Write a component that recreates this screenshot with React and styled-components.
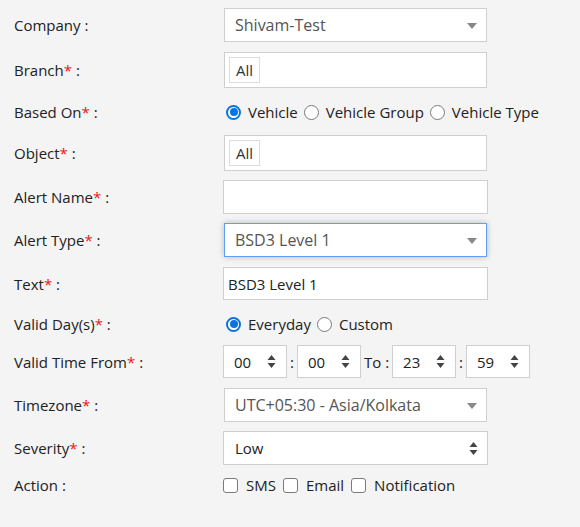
import React from 'react';
import styled, { createGlobalStyle } from 'styled-components';

const GlobalStyle = createGlobalStyle`
  html, body {
    margin: 0;
    padding: 0;
    background: #f4f4f4;
  }
  body {
    font-family: "Open Sans", "Liberation Sans", sans-serif;
    font-size: 15px;
    color: #222;
  }
`;

export default function App() {
    return (
        <>
            <GlobalStyle />
            <Form>
                <Row $h={34}>
                    <Label>Company :</Label>
                    <Select2 $w={263}>
                        <span>Shivam-Test</span>
                        <Caret />
                    </Select2>
                </Row>
                <Row $h={36} $mt={10}>
                    <Label required>Branch</Label>
                    <TagBox>
                        <Tag>All</Tag>
                    </TagBox>
                </Row>
                <Row $h={26} $mt={11}>
                    <Label required>Based On</Label>
                    <Choices>
                        <Choice><Radio checked /><span>Vehicle</span></Choice>
                        <Choice><Radio /><span>Vehicle Group</span></Choice>
                        <Choice><Radio /><span>Vehicle Type</span></Choice>
                    </Choices>
                </Row>
                <Row $h={36} $mt={10}>
                    <Label required>Object</Label>
                    <TagBox>
                        <Tag>All</Tag>
                    </TagBox>
                </Row>
                <Row $h={34} $mt={9}>
                    <Label required>Alert Name</Label>
                    <TextBox />
                </Row>
                <Row $h={34} $mt={9}>
                    <Label required>Alert Type</Label>
                    <Select2 $w={263} $focus>
                        <span>BSD3 Level 1</span>
                        <Caret />
                    </Select2>
                </Row>
                <Row $h={33} $mt={10}>
                    <Label required>Text</Label>
                    <TextBox>BSD3 Level 1</TextBox>
                </Row>
                <Row $h={26} $mt={11}>
                    <Label required>Valid Day(s)</Label>
                    <Choices>
                        <Choice><Radio checked /><span>Everyday</span></Choice>
                        <Choice><Radio /><span>Custom</span></Choice>
                    </Choices>
                </Row>
                <Row $h={33} $mt={8}>
                    <Label required>Valid Time From</Label>
                    <TimeGroup>
                        <TimeBox>00<Spinner /></TimeBox>
                        <Sep>:</Sep>
                        <TimeBox>00<Spinner /></TimeBox>
                        <Sep>To :</Sep>
                        <TimeBox>23<Spinner /></TimeBox>
                        <Sep>:</Sep>
                        <TimeBox>59<Spinner /></TimeBox>
                    </TimeGroup>
                </Row>
                <Row $h={34} $mt={10}>
                    <Label required>Timezone</Label>
                    <Select2 $w={263}>
                        <span>UTC+05:30 - Asia/Kolkata</span>
                        <Caret />
                    </Select2>
                </Row>
                <Row $h={34} $mt={9}>
                    <Label required>Severity</Label>
                    <NativeSelect>
                        <span>Low</span>
                        <Spinner />
                    </NativeSelect>
                </Row>
                <Row $h={24} $mt={8}>
                    <Label>Action :</Label>
                    <Checks>
                        <Check><Box /><span>SMS</span></Check>
                        <Check><Box /><span>Email</span></Check>
                        <Check><Box /><span>Notification</span></Check>
                    </Checks>
                </Row>
            </Form>
        </>
    );
}

function Label({ required, children }) {
    if (!required) return <LabelText>{children}</LabelText>;
    return (
        <LabelText>
            {children}<Star>*</Star> :
        </LabelText>
    );
}

function Caret() {
    return (
        <CaretIcon width="10" height="6" viewBox="0 0 10 6">
            <path d="M0 0 L10 0 L5 6 Z" fill="#888" />
        </CaretIcon>
    );
}

function Spinner() {
    return (
        <SpinIcon width="9" height="15" viewBox="0 0 9 15">
            <path d="M0.5 6 L4.5 1 L8.5 6 Z" fill="#444" />
            <path d="M0.5 9 L8.5 9 L4.5 14 Z" fill="#444" />
        </SpinIcon>
    );
}

function Radio({ checked }) {
    return <RadioDot $checked={checked} />;
}

const Form = styled.div`
    padding: 8px 0 20px 14px;
    display: flex;
    flex-direction: column;
`

const Row = styled.div`
    display: flex;
    align-items: center;
    height: ${p => p.$h}px;
    margin-top: ${p => p.$mt || 0}px;
`

const LabelText = styled.div`
    width: 209px;
    flex-shrink: 0;
    color: #222;
    line-height: 20px;
`

const Star = styled.span`
    color: #f01414;
`

const Select2 = styled.div`
    box-sizing: border-box;
    width: ${p => p.$w}px;
    height: 100%;
    margin-left: 1px;
    display: flex;
    align-items: center;
    justify-content: space-between;
    padding: 0 9px 0 10px;
    background: #fff;
    border: 1px solid ${p => p.$focus ? '#5e9ef4' : '#cfcfcf'};
    box-shadow: ${p => p.$focus ? '0 0 6px rgba(0, 0, 0, 0.25)' : 'none'};
    color: #555;
    font-size: 16px;
`

const CaretIcon = styled.svg`
    display: block;
    margin-top: 2px;
`

const SpinIcon = styled.svg`
    display: block;
`

const TagBox = styled.div`
    box-sizing: border-box;
    width: 263px;
    height: 100%;
    margin-left: 1px;
    background: #fff;
    border: 1px solid #cfcfcf;
    padding: 4px;
    display: flex;
    align-items: flex-start;
`

const Tag = styled.span`
    box-sizing: border-box;
    height: 26px;
    padding: 0 6px;
    border: 1px solid #dcdcdc;
    line-height: 24px;
    font-size: 15px;
    color: #333;
`

const TextBox = styled.div`
    box-sizing: border-box;
    width: 265px;
    height: 100%;
    background: #fff;
    border: 1px solid #cfcfcf;
    padding: 0 4px;
    display: flex;
    align-items: center;
    color: #222;
`

const Choices = styled.div`
    display: flex;
    align-items: center;
    gap: 6px;
    padding-left: 3px;
`

const Choice = styled.label`
    display: flex;
    align-items: center;
    gap: 7px;
    color: #222;
`

const RadioDot = styled.span`
    box-sizing: border-box;
    width: 15px;
    height: 15px;
    border-radius: 50%;
    background: #fff;
    border: ${p => p.$checked ? '2px solid #0a74da' : '1px solid #7a7a7a'};
    position: relative;
    &::after {
        content: '';
        display: ${p => p.$checked ? 'block' : 'none'};
        position: absolute;
        left: 1.5px;
        top: 1.5px;
        width: 8px;
        height: 8px;
        border-radius: 50%;
        background: #0a74da;
    }
`

const TimeGroup = styled.div`
    display: flex;
    align-items: center;
    height: 100%;
`

const TimeBox = styled.div`
    box-sizing: border-box;
    width: 64px;
    height: 100%;
    background: #fff;
    border: 1px solid #cfcfcf;
    display: flex;
    align-items: center;
    justify-content: space-between;
    padding: 0 10px 0 10px;
    color: #222;
`

const Sep = styled.span`
    padding: 0 3px;
    color: #222;
`

const NativeSelect = styled.div`
    box-sizing: border-box;
    width: 265px;
    height: 100%;
    background: #fff;
    border: 1px solid #cfcfcf;
    display: flex;
    align-items: center;
    justify-content: space-between;
    padding: 0 9px 0 11px;
    color: #222;
`

const Checks = styled.div`
    display: flex;
    align-items: center;
    gap: 7px;
`

const Check = styled.label`
    display: flex;
    align-items: center;
    gap: 8px;
    color: #222;
`

const Box = styled.span`
    box-sizing: border-box;
    width: 15px;
    height: 15px;
    border: 1px solid #7a7a7a;
    border-radius: 3px;
    background: #fff;
`
